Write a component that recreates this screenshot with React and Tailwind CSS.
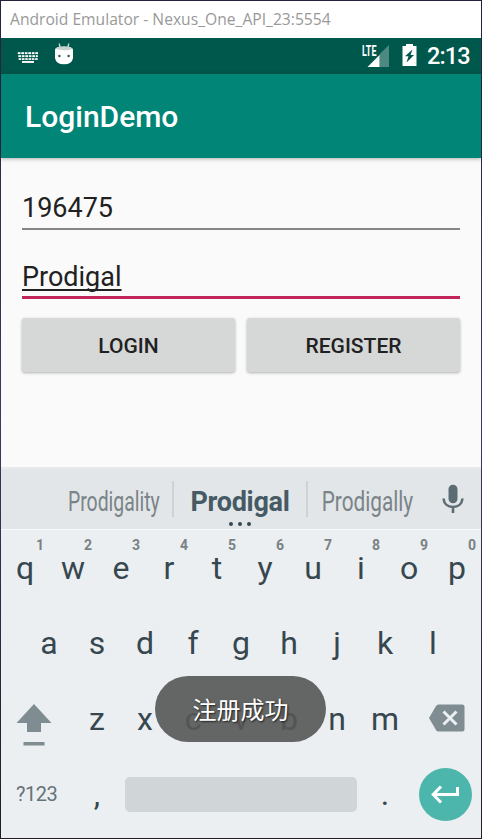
import React from 'react';

const topRow = [['q', 1], ['w', 2], ['e', 3], ['r', 4], ['t', 5], ['y', 6], ['u', 7], ['i', 8], ['o', 9], ['p', 0]];
const homeRow = ['a', 's', 'd', 'f', 'g', 'h', 'j', 'k', 'l'];
const bottomRow = ['z', 'x', 'c', 'v', 'b', 'n', 'm'];

function Key({ children }) {
  return <div className="flex w-12 items-center justify-center text-[32px] leading-none">{children}</div>;
}

function StatusBar() {
  return (
    <div className="flex h-9 items-center bg-[#00574b] text-white">
      <svg className="ml-4 mt-1 shrink-0" width="22" height="12" viewBox="0 0 22 12" fill="#fff">
        {[0, 3].map((y) => [0, 1, 2, 3, 4, 5].map((i) => (
          <rect key={`${y}-${i}`} x={0.8 + i * 3.5 + (y ? 0.5 : 0)} y={y + 0.2} width={i === 5 && y ? 2 : 2.7} height="1.9" />
        )))}
        {[0, 1, 2, 3, 4, 5].map((i) => <rect key={i} x={1.6 + i * 3.3} y="6.2" width="2.6" height="1.7" />)}
        <rect x="5" y="9" width="12" height="1.9" />
      </svg>
      <svg className="ml-[15px] -mt-1 shrink-0" width="20" height="22" viewBox="0 0 20 22">
        <path d="M5.3 .5 6 5M14.700 .5 14 5" stroke="#b9dcd6" strokeWidth="1.5" />
        <path d="M1 6.5Q1.5 3.5 10 3.5T19 6.5V15Q18 21.3 10 21.3T1 15Z" fill="#fff" />
        <path d="M1.5 6Q2.5 3.5 10 3.5T18.5 6Q14 7.5 10 7.2T1.5 6Z" fill="#c5d2d0" />
        <circle cx="5.4" cy="13" r="1.3" fill="#425f5b" />
        <circle cx="14.6" cy="13" r="1.3" fill="#425f5b" />
      </svg>
      <div className="relative ml-auto h-[22px] w-[27px]">
        <span className="absolute left-0 top-0 origin-left scale-x-[.64] text-[14px] font-bold leading-[12px]">LTE</span>
        <svg width="27" height="22" viewBox="0 0 27 22">
          <path d="M17.5 9.3 27 0V22H17.5Z" fill="#4d8981" />
          <path d="M5.5 22 17.5 10V22Z" fill="#fff" />
        </svg>
      </div>
      <svg className="ml-[13px] -mt-0.5 shrink-0" width="15" height="22" viewBox="0 0 15 22">
        <path d="M4 0H11V2H14.5V22H.5V2H4Z" fill="#fff" />
        <path d="M10.5 5.5 3 12.2H6.5L4.5 18.5 12 11H8.5Z" fill="#00574b" />
      </svg>
      <span className="ml-[10px] mr-3 w-[42px] whitespace-nowrap pt-0.5 text-[23.500px] font-medium leading-none -tracking-[.9px]">2:13</span>
    </div>
  );
}

function Suggestions() {
  return (
    <div className="flex h-[61px] items-center border-b border-[#f8fafb] bg-[#e2e6e8] text-[27px] leading-none text-[#7a8387]">
      <div className="ml-[54px] flex w-[117px] justify-center">
        <span className="-mx-1 scale-x-[.72] whitespace-nowrap pt-[6px]">Prodigality</span>
      </div>
      <div className="h-9 w-[2px] bg-[#cdd2d5]" />
      <div className="relative flex w-[132px] justify-center font-bold text-[#455a64]">
        <span className="pt-[6px] -tracking-[.3px]">Prodigal</span>
        <div className="absolute -bottom-[10px] flex gap-[5px]">
          <i className="size-1 rounded-full bg-[#37474f]" />
          <i className="size-1 rounded-full bg-[#37474f]" />
          <i className="size-1 rounded-full bg-[#37474f]" />
        </div>
      </div>
      <div className="h-9 w-[2px] bg-[#cdd2d5]" />
      <div className="flex w-[118px] justify-center">
        <span className="scale-x-[.77] whitespace-nowrap pt-[6px]">Prodigally</span>
      </div>
      <svg className="ml-4 shrink-0" width="22" height="30" viewBox="0 0 22 30">
        <rect x="6.5" y="0.7" width="9" height="18.5" rx="4.5" fill="#5b6c73" />
        <path d="M1.5 14.5C2 20 6 23 11 23S20 20 20.500 14.500M11 23V29" fill="none" stroke="#5b6c73" strokeWidth="2.600" />
      </svg>
    </div>
  );
}

function Keyboard() {
  return (
    <div className="flex h-[308px] flex-col bg-[#ebeff1] text-[#37474f]">
      <div className="flex h-[75px]">
        {topRow.map(([letter, digit]) => (
          <div key={letter} className="relative flex">
            <Key>{letter}</Key>
            <span className="absolute right-[5px] top-[7px] text-sm font-bold leading-4 text-[#788287]">{digit}</span>
          </div>
        ))}
      </div>
      <div className="flex h-[76px] justify-center">
        {homeRow.map((letter) => <Key key={letter}>{letter}</Key>)}
      </div>
      <div className="flex h-[76px] items-stretch">
        <div className="flex w-[72px] items-center pl-[15px]">
          <svg className="mt-3" width="36" height="43" viewBox="0 0 36 43" fill="#7f8c91">
            <path d="M18 0 35.500 19H25V28H11V19H.5ZM7.500 38H28.500V41.500H7.500Z" />
          </svg>
        </div>
        {bottomRow.map((letter) => <Key key={letter}>{letter}</Key>)}
        <div className="flex flex-1 items-center pl-5">
          <svg className="-mt-0.5" width="36" height="28" viewBox="0 0 36 28">
            <path d="M9.500.5H33Q35.500.5 35.500 3V25Q35.500 27.500 33 27.500H9.500Q8 27.500 7 26L0 14 7 2Q8 .5 9.500.5Z" fill="#7f8c91" />
            <path d="m14.500 7.500 13 13m0-13-13 13" stroke="#ebeff1" strokeWidth="3" />
          </svg>
        </div>
      </div>
      <div className="flex h-[74px] items-center">
        <span className="w-[72px] pl-[15px] text-[20px] leading-none -tracking-[.5px] text-[#667379]">?123</span>
        <Key>,</Key>
        <div className="ml-1 h-[35px] w-[232px] rounded-[5px] bg-[#d0d5d8]" />
        <div className="ml-1"><Key>.</Key></div>
        <div className="ml-[10px] flex size-[53px] items-center justify-center rounded-full bg-[#4db6ac] pr-0.5">
          <svg width="30" height="20" viewBox="0 0 30 20" fill="none" stroke="#fff" strokeWidth="3">
            <path d="M11 2.500 3.200 10.500 11 18.500M3.500 10.500H27.500V3" />
          </svg>
        </div>
      </div>
    </div>
  );
}

export default function App() {
  return (
    <div className="relative h-[839px] w-[482px] overflow-hidden bg-linear-to-b from-[#24223d] via-[#3c3860] to-[#201c28] p-px font-[Roboto,sans-serif]">
      <div className="flex h-[837px] flex-col bg-[#fafafa]">
        <div className="flex h-[37px] items-center bg-white pl-[9px] text-[15.650px] text-[#999] font-['Open_Sans',sans-serif]">
          <span className="whitespace-nowrap">Android Emulator - Nexus_One_API_23:5554</span>
        </div>
        <StatusBar />
        <header className="z-10 flex h-[84px] items-center bg-[#008577] pl-6 text-[30px] font-medium text-white shadow-[0_1px_4px_rgba(0,0,0,.3)]">
          LoginDemo
        </header>
        <main className="flex h-[309px] flex-col px-[21px] text-[27px] text-[#212121]">
          <div className="mt-[29px] flex h-[43px] items-center border-b-2 border-[#858585] pt-0.5 leading-none">196475</div>
          <div className="mt-[25px] flex h-[44px] items-center border-b-[3px] border-[#c2255c] pt-[3px] leading-none">
            <span className="underline decoration-2 underline-offset-[3px] [text-decoration-skip-ink:none]">Prodigal</span>
          </div>
          <div className="mt-[19px] flex gap-3 text-[21px] font-medium">
            <button className="h-[54px] flex-1 rounded-[3px] bg-[#d6d7d7] pt-[3px] shadow-[0_1px_3px_rgba(0,0,0,.3)]">LOGIN</button>
            <button className="h-[54px] flex-1 rounded-[3px] bg-[#d6d7d7] pt-[3px] shadow-[0_1px_3px_rgba(0,0,0,.3)]">REGISTER</button>
          </div>
        </main>
        <div className="h-[2px] bg-[#e8e9e9]" />
        <Suggestions />
        <Keyboard />
      </div>
      <div className="absolute left-[155px] top-[676px] z-20 flex h-[66px] w-[171px] items-center justify-center rounded-full bg-[#555]/90 pt-[3px] text-2xl leading-none text-white font-[Roboto,'Noto_Sans_CJK_SC',sans-serif] [text-shadow:1px_1px_2px_rgba(0,0,0,.7)]">
        注册成功
      </div>
    </div>
  );
}
